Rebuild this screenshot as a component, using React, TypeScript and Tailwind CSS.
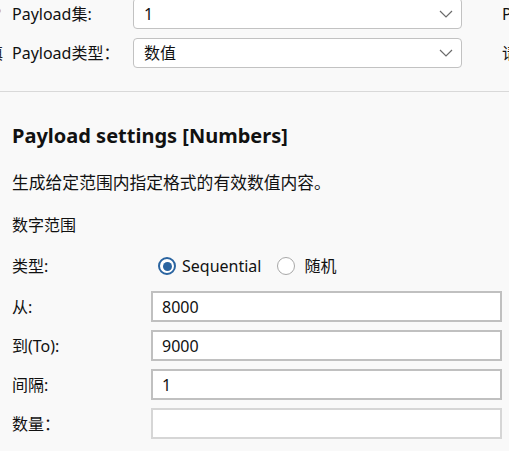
import React from 'react';

const font = {
  fontFamily: '"Noto Sans", "Noto Sans CJK SC", sans-serif',
};

const Chevron: React.FC = () => (
  <svg width="14" height="8" viewBox="0 0 14 8" className="shrink-0">
    <path d="M1 1 L7 7 L13 1" fill="none" stroke="#6b6b6b" strokeWidth="1.2" />
  </svg>
);

interface SelectRowProps {
  label: string;
  value: string;
  clipLeft: React.ReactNode;
  clipRight: string;
  className?: string;
}

const SelectRow: React.FC<SelectRowProps> = ({ label, value, clipLeft, clipRight, className }) => (
  <div className={`flex items-center ${className ?? ''}`}>
    <span className="w-[12px] overflow-hidden shrink-0 flex justify-end">{clipLeft}</span>
    <span className="w-[121px] shrink-0 text-[16px] text-[#111] whitespace-nowrap">{label}</span>
    <div className="w-[329px] h-full shrink-0 bg-white border border-[#c2c2c2] rounded-[4px] flex items-center justify-between pl-[10px] pr-[8px]">
      <span className="text-[16px] text-[#111]">{value}</span>
      <Chevron />
    </div>
    <span className="ml-[40px] text-[16px] text-[#111] whitespace-nowrap">{clipRight}</span>
  </div>
);

const Field: React.FC<{ label: string; value?: string; dim?: boolean }> = ({ label, value, dim }) => (
  <div className="flex items-center h-[31px]">
    <span className="w-[139px] shrink-0 text-[16px] text-[#111]">{label}</span>
    <div
      className={`w-[351px] h-full shrink-0 bg-white border-2 flex items-center px-[9px] ${
        dim ? 'border-[#d6d6d6]' : 'border-[#c0c0c0]'
      }`}
    >
      <span className="text-[16px] text-[#111]">{value}</span>
    </div>
  </div>
);

export default function App() {
  return (
    <div className="w-[509px] h-[451px] bg-[#f9f9f9] overflow-hidden" style={font}>
      {/* top payload selectors */}
      <div className="h-[92px] border-b border-[#d9d9d9] overflow-hidden">
        <SelectRow
          label="Payload集:"
          value="1"
          clipLeft={<span className="text-[16px] leading-none text-[#c98a12] mr-[11px] whitespace-nowrap">?</span>}
          clipRight="Payload"
          className="h-[31px] mt-[-2px]"
        />
        <SelectRow
          label="Payload类型："
          value="数值"
          clipLeft={<span className="text-[16px] leading-none text-[#222] mr-[9px] whitespace-nowrap">填</span>}
          clipRight="请"
          className="h-[30px] mt-[9px]"
        />
      </div>

      <div className="pl-[12px]">
        <h2 className="mt-[31px] h-[26px] leading-[26px] text-[20px] font-bold text-[#111] whitespace-nowrap">
          Payload settings [Numbers]
        </h2>
        <p className="mt-[22px] h-[24px] leading-[24px] text-[16.8px] text-[#111] whitespace-nowrap">
          生成给定范围内指定格式的有效数值内容。
        </p>
        <p className="mt-[18px] h-[24px] leading-[24px] text-[16px] text-[#111]">数字范围</p>

        <div className="mt-[17px] h-[24px] flex items-center">
          <span className="w-[146px] shrink-0 text-[16px] text-[#111]">类型:</span>
          <span className="w-[18px] h-[18px] rounded-full border-2 border-[#2a64a0] bg-white flex items-center justify-center">
            <span className="w-[9px] h-[9px] rounded-full bg-[#2a64a0]" />
          </span>
          <span className="ml-[6px] text-[16px] text-[#111]">Sequential</span>
          <span className="ml-[16px] w-[18px] h-[18px] rounded-full border border-[#a8a8a8] bg-white" />
          <span className="ml-[9px] text-[16px] text-[#111]">随机</span>
        </div>

        <div className="mt-[13px] flex flex-col gap-[8px]">
          <Field label="从:" value="8000" />
          <Field label="到(To):" value="9000" />
          <Field label="间隔:" value="1" />
          <Field label="数量：" dim />
        </div>
      </div>
    </div>
  );
}
